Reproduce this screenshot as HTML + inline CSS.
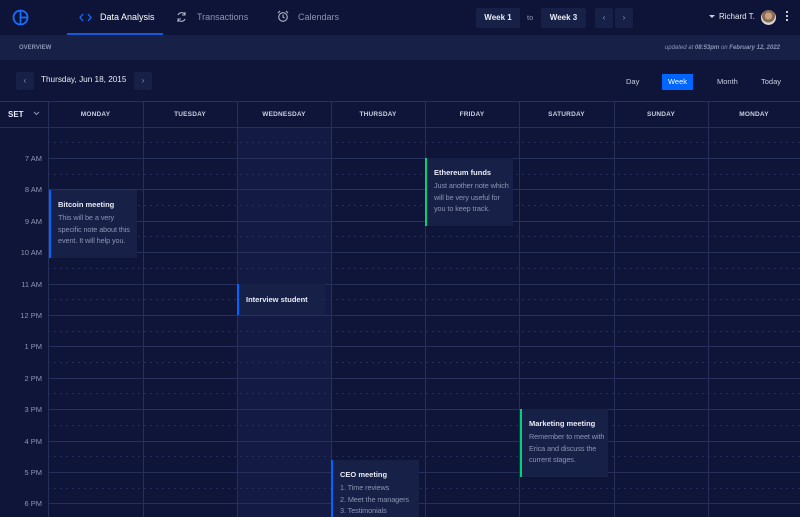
<!DOCTYPE html>
<html><head><meta charset="utf-8"><style>
*{margin:0;padding:0;box-sizing:border-box}
body{width:800px;height:517px;overflow:hidden;background:#0e1538;font-family:"Liberation Sans",sans-serif;color:#fff;position:relative}
.a{position:absolute}
.top{left:0;top:0;width:800px;height:35px;background:#0d1437}
.sub{left:0;top:35px;width:800px;height:25px;background:#172047}
.nav{font-size:9px;top:12px}
.btn{background:#172047;border-radius:2px;font-size:8px;font-weight:bold;text-align:center;line-height:20px;color:#e8ebf5}
.hdr{top:102px;height:25px;font-size:6.5px;font-weight:bold;color:#c9cee0;text-align:center;line-height:25px;letter-spacing:.2px}
.lbl{left:0;width:42px;text-align:right;font-size:7.5px;color:#8d94b3}
.ev{background:#172047;padding:10px 0 0 7px;white-space:nowrap}
.ev b{display:block;font-size:7.5px;color:#e8ebf5;margin-bottom:3px}
.ev p{font-size:7.3px;color:#8d94b3;line-height:11.5px;letter-spacing:-.1px}
</style></head><body>
<div class="a top"></div>
<svg class="a" style="left:12px;top:9px" width="17" height="17" viewBox="0 0 17 17"><circle cx="8.5" cy="8.5" r="7" fill="none" stroke="#1a6cff" stroke-width="1.8"/><path d="M8.5 1.5V15.5M8.5 8.5H15.5" stroke="#1a6cff" stroke-width="1.8" fill="none"/></svg>
<svg class="a" style="left:79px;top:13px" width="13" height="9" viewBox="0 0 13 9"><path d="M4 1L1 4.5L4 8M9 1L12 4.5L9 8" stroke="#1a6cff" stroke-width="1.3" fill="none"/></svg>
<div class="a nav" style="left:100px;color:#fff">Data Analysis</div>
<div class="a" style="left:67px;top:33px;width:96px;height:2px;background:#1659d6"></div>
<svg class="a" style="left:176px;top:11px" width="11" height="12" viewBox="0 0 11 12"><path d="M2 4A4 4 0 0 1 9 3.5M9 8A4 4 0 0 1 2 8.5" stroke="#b0b6cc" stroke-width="1.1" fill="none"/><path d="M9 1V4H6M2 11V8H5" stroke="#b0b6cc" stroke-width="1.1" fill="none"/></svg>
<div class="a nav" style="left:197px;color:#8d94b3">Transactions</div>
<svg class="a" style="left:277px;top:10px" width="12" height="13" viewBox="0 0 12 13"><circle cx="6" cy="7" r="4.3" fill="none" stroke="#b0b6cc" stroke-width="1.1"/><path d="M6 4.5V7L7.5 8M1 3L3 1M11 3L9 1" stroke="#b0b6cc" stroke-width="1.1" fill="none"/></svg>
<div class="a nav" style="left:298px;color:#8d94b3">Calendars</div>
<div class="a btn" style="left:476px;top:8px;width:44px">Week 1</div>
<div class="a" style="left:527px;top:13px;font-size:7.5px;color:#8d94b3">to</div>
<div class="a btn" style="left:541px;top:8px;width:45px">Week 3</div>
<div class="a btn" style="left:595px;top:8px;width:18px;color:#8d94b3;font-weight:normal">&#8249;</div>
<div class="a btn" style="left:615px;top:8px;width:18px;color:#8d94b3;font-weight:normal">&#8250;</div>
<div class="a" style="left:709px;top:15px;width:0;height:0;border-left:3px solid transparent;border-right:3px solid transparent;border-top:3.5px solid #c9cee0"></div>
<div class="a" style="left:719px;top:12px;font-size:8px;color:#e8ebf5">Richard T.</div>
<div class="a" style="left:761px;top:10px;width:15px;height:15px;border-radius:50%;background:radial-gradient(circle at 50% 40%,#c9a080 0 30%,#8a6a55 31% 55%,#d8d8d8 56%)"></div>
<div class="a" style="left:786px;top:11px;width:2px;height:2px;background:#ccc;box-shadow:0 4px #ccc,0 8px #ccc"></div>
<div class="a sub"></div>
<div class="a" style="left:19px;top:45px;font-size:6px;font-weight:bold;color:#8d94b3">OVERVIEW</div>
<div class="a" style="right:20px;top:45px;font-size:6px;font-style:italic;color:#8d94b3">updated at <b>08:53pm</b> on <b>February 12, 2022</b></div>
<div class="a btn" style="left:16px;top:72px;width:18px;height:18px;line-height:18px;color:#8d94b3;font-weight:normal">&#8249;</div>
<div class="a" style="left:41px;top:75px;font-size:8.2px;color:#e8ebf5">Thursday, Jun 18, 2015</div>
<div class="a btn" style="left:134px;top:72px;width:18px;height:18px;line-height:18px;color:#8d94b3;font-weight:normal">&#8250;</div>
<div class="a" style="left:626px;top:77px;font-size:7.5px;color:#c9cee0">Day</div>
<div class="a" style="left:662px;top:74px;width:31px;height:16px;background:#0066ff;font-size:7.5px;text-align:center;line-height:16px">Week</div>
<div class="a" style="left:717px;top:77px;font-size:7.5px;color:#c9cee0">Month</div>
<div class="a" style="left:761px;top:77px;font-size:7.5px;color:#c9cee0">Today</div>
<div class="a" style="left:237px;top:127px;width:94px;height:390px;background:#131b45"></div>
<svg class="a" style="left:0;top:0" width="800" height="517">
<g stroke="#26305a" stroke-width="1">
<line x1="0" y1="101.5" x2="800" y2="101.5"/><line x1="0" y1="127.5" x2="800" y2="127.5"/>
<line x1="48.5" y1="101" x2="48.5" y2="517"/><line x1="143.5" y1="101" x2="143.5" y2="517"/><line x1="237.5" y1="101" x2="237.5" y2="517"/><line x1="331.5" y1="101" x2="331.5" y2="517"/><line x1="425.5" y1="101" x2="425.5" y2="517"/><line x1="519.5" y1="101" x2="519.5" y2="517"/><line x1="614.5" y1="101" x2="614.5" y2="517"/><line x1="708.5" y1="101" x2="708.5" y2="517"/>
<line x1="48" y1="158.5" x2="800" y2="158.5"/><line x1="48" y1="189.5" x2="800" y2="189.5"/><line x1="48" y1="221.5" x2="800" y2="221.5"/><line x1="48" y1="252.5" x2="800" y2="252.5"/><line x1="48" y1="284.5" x2="800" y2="284.5"/><line x1="48" y1="315.5" x2="800" y2="315.5"/><line x1="48" y1="346.5" x2="800" y2="346.5"/><line x1="48" y1="378.5" x2="800" y2="378.5"/><line x1="48" y1="409.5" x2="800" y2="409.5"/><line x1="48" y1="441.5" x2="800" y2="441.5"/><line x1="48" y1="472.5" x2="800" y2="472.5"/><line x1="48" y1="503.5" x2="800" y2="503.5"/>
</g>
<g stroke="#242e5a" stroke-width="1" stroke-dasharray="2 4">
<line x1="48" y1="142.5" x2="800" y2="142.5"/><line x1="48" y1="174.5" x2="800" y2="174.5"/><line x1="48" y1="205.5" x2="800" y2="205.5"/><line x1="48" y1="236.5" x2="800" y2="236.5"/><line x1="48" y1="268.5" x2="800" y2="268.5"/><line x1="48" y1="299.5" x2="800" y2="299.5"/><line x1="48" y1="331.5" x2="800" y2="331.5"/><line x1="48" y1="362.5" x2="800" y2="362.5"/><line x1="48" y1="393.5" x2="800" y2="393.5"/><line x1="48" y1="425.5" x2="800" y2="425.5"/><line x1="48" y1="456.5" x2="800" y2="456.5"/><line x1="48" y1="488.5" x2="800" y2="488.5"/>
</g>
<path d="M34 112L36.5 114.5L39 112" stroke="#8d94b3" fill="none"/>
</svg>
<div class="a" style="left:8px;top:110px;font-size:8px;font-weight:bold;color:#e8ebf5">SET</div>
<div class="a hdr" style="left:48px;width:95px">MONDAY</div>
<div class="a hdr" style="left:143px;width:94px">TUESDAY</div>
<div class="a hdr" style="left:237px;width:94px">WEDNESDAY</div>
<div class="a hdr" style="left:331px;width:94px">THURSDAY</div>
<div class="a hdr" style="left:425px;width:94px">FRIDAY</div>
<div class="a hdr" style="left:519px;width:95px">SATURDAY</div>
<div class="a hdr" style="left:614px;width:94px">SUNDAY</div>
<div class="a hdr" style="left:708px;width:92px">MONDAY</div>
<div class="a lbl" style="top:154px">7 AM</div>
<div class="a lbl" style="top:185px">8 AM</div>
<div class="a lbl" style="top:217px">9 AM</div>
<div class="a lbl" style="top:248px">10 AM</div>
<div class="a lbl" style="top:280px">11 AM</div>
<div class="a lbl" style="top:311px">12 PM</div>
<div class="a lbl" style="top:342px">1 PM</div>
<div class="a lbl" style="top:374px">2 PM</div>
<div class="a lbl" style="top:405px">3 PM</div>
<div class="a lbl" style="top:437px">4 PM</div>
<div class="a lbl" style="top:468px">5 PM</div>
<div class="a lbl" style="top:499px">6 PM</div>
<div class="a ev" style="left:49px;top:190px;width:88px;height:68px;border-left:2px solid #0066ff"><b>Bitcoin meeting</b><p>This will be a very<br>specific note about this<br>event. It will help you.</p></div>
<div class="a ev" style="left:237px;top:284px;width:88px;height:31px;border-left:2px solid #0066ff;padding-top:11px"><b>Interview student</b></div>
<div class="a ev" style="left:425px;top:158px;width:88px;height:68px;border-left:2px solid #00d27a"><b>Ethereum funds</b><p>Just another note which<br>will be very useful for<br>you to keep track.</p></div>
<div class="a ev" style="left:520px;top:409px;width:88px;height:68px;border-left:2px solid #00d27a"><b>Marketing meeting</b><p>Remember to meet with<br>Erica and discuss the<br>current stages.</p></div>
<div class="a ev" style="left:331px;top:460px;width:88px;height:57px;border-left:2px solid #0066ff"><b>CEO meeting</b><p>1. Time reviews<br>2. Meet the managers<br>3. Testimonials</p></div>
</body></html>
